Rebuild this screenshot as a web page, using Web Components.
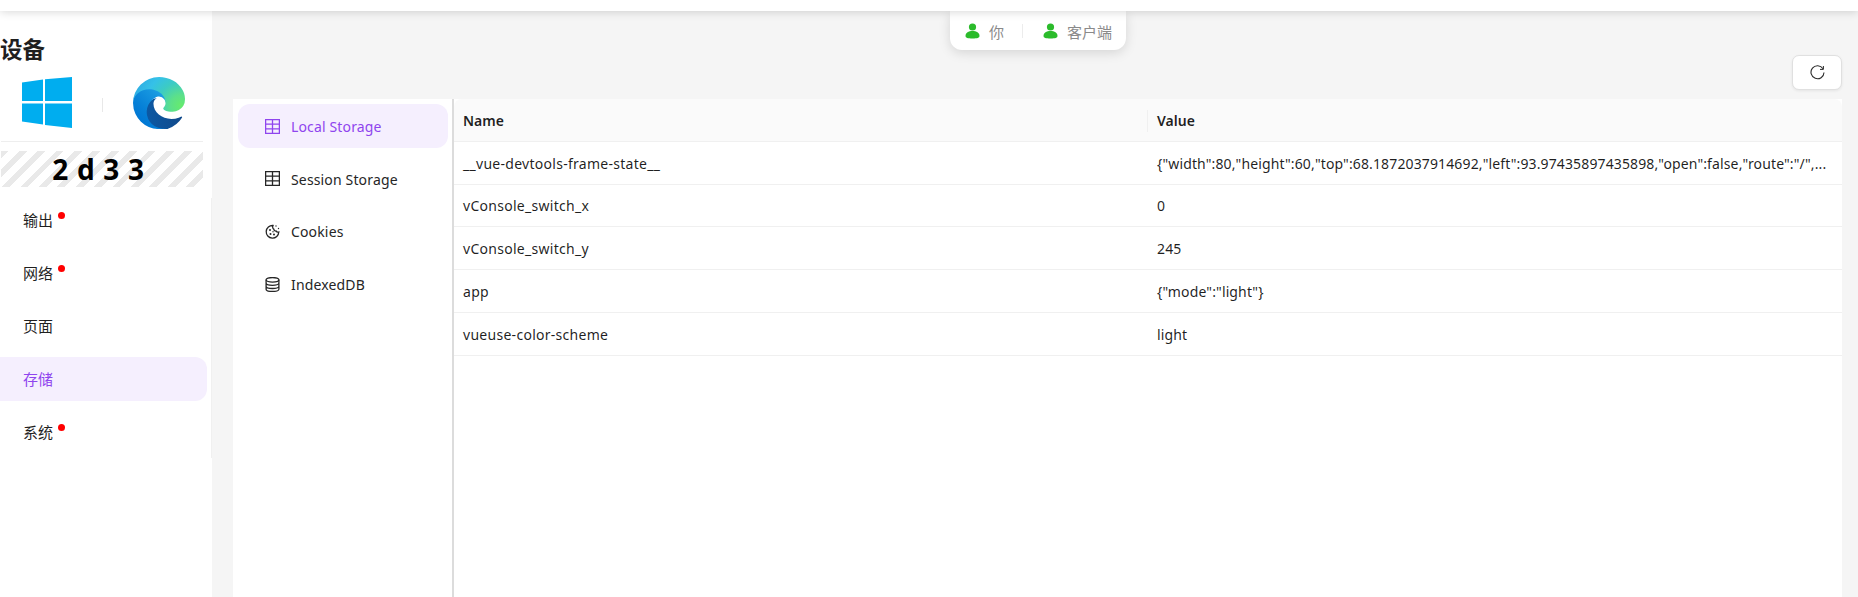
<!DOCTYPE html>
<html lang="zh-CN"><head><meta charset="utf-8"><title>设备</title>
<style>
html,body{margin:0;height:100%;overflow:hidden;background:#f5f5f5}
body{font:14px/22px "Noto Sans","Noto Sans CJK SC",sans-serif;color:rgba(0,0,0,.88)}
</style></head><body>
<app-shell>
  <device-sidebar slot="side">
    <nav-item dot>输出</nav-item>
    <nav-item dot>网络</nav-item>
    <nav-item>页面</nav-item>
    <nav-item active>存储</nav-item>
    <nav-item dot>系统</nav-item>
  </device-sidebar>
  <user-pill slot="pill"></user-pill>
  <refresh-button slot="tools"></refresh-button>
  <storage-panel slot="panel">
    <tab-item slot="tabs" icon="table" active>Local Storage</tab-item>
    <tab-item slot="tabs" icon="table">Session Storage</tab-item>
    <tab-item slot="tabs" icon="cookie">Cookies</tab-item>
    <tab-item slot="tabs" icon="db">IndexedDB</tab-item>
    <kv-table></kv-table>
  </storage-panel>
</app-shell>
<script>
const def=(n,html)=>{customElements.define(n,class extends HTMLElement{
  connectedCallback(){ if(this.shadowRoot) return; const r=this.attachShadow({mode:'open'});
    r.innerHTML=typeof html==='function'?html(this):html;}
});};
def('app-shell',`<style>
:host{display:flex;flex-direction:column;height:597px;overflow:hidden}
.top{height:11px;flex:none;background:#fff;box-shadow:0 1px 10px rgba(0,0,0,.16);position:relative;z-index:2}
.body{flex:1;display:flex;min-height:0;margin-top:-11px}
.main{flex:1;display:flex;flex-direction:column;min-width:0;padding-top:11px}
.bar{height:88px;flex:none;display:flex;align-items:flex-start;padding-left:738px;padding-right:16px}
.panelwrap{flex:1;min-height:0;display:flex;padding:0 16px 0 21px}
::slotted([slot=tools]){margin-left:auto;margin-top:44px}
</style>
<div class="top"></div>
<div class="body"><slot name="side"></slot>
<div class="main"><div class="bar"><slot name="pill"></slot><slot name="tools"></slot></div>
<div class="panelwrap"><slot name="panel"></slot></div></div></div>`);
def('device-sidebar',`<style>
:host{display:flex;flex-direction:column;width:212px;flex:none;background:#fff;padding-top:11px;box-sizing:border-box}
h2{margin:28px 0 0 0;font-size:22.5px;line-height:22px;font-weight:700;color:#1f1f1f}
.logos{display:flex;align-items:center;height:52px;margin-top:16px;padding-left:22px}
.sep{width:1px;height:14px;background:#e8e8e8;margin:4px 30px 0}
.hr{height:1px;background:#eee;margin:12px 9px 0 1px}
.code{height:36px;margin:9px 9px 0 1px;padding-right:7px;box-sizing:border-box;display:flex;align-items:center;justify-content:center;
  font-size:28px;font-weight:700;color:#000;letter-spacing:.7px;line-height:36px;
  background:repeating-linear-gradient(135deg,#e9e9e9 0 5.5px,#fff 5.5px 13px)}
nav{width:212px;box-sizing:border-box;margin-top:11px;height:260px;border-right:1px solid #f0f0f0;display:flex;flex-direction:column;gap:9px}
</style>
<h2>设备</h2>
<div class="logos">
<svg width="50" height="52" viewBox="0 0 50 52"><g fill="#00adef"><polygon points="0,5.500 21,2.500 21,24 0,24"/><polygon points="23,2.300 50,0 50,24 23,24"/><polygon points="0,26.500 21,26.500 21,47.500 0,44.500"/><polygon points="23,26.500 50,26.500 50,51 23,48"/></g></svg>
<div class="sep"></div>
<svg width="52" height="52" viewBox="0 0 256 256"><defs>
<linearGradient id="a" x1="63.300" y1="84" x2="241.700" y2="84" gradientTransform="matrix(1 0 0 -1 0 266)" gradientUnits="userSpaceOnUse"><stop offset="0" stop-color="#0c59a4"/><stop offset="1" stop-color="#114a8b"/></linearGradient>
<linearGradient id="b" x1="152.900" y1="166.300" x2="41.400" y2="44.800" gradientTransform="matrix(1 0 0 -1 0 266)" gradientUnits="userSpaceOnUse"><stop offset="0" stop-color="#1b9de2"/><stop offset=".16" stop-color="#1595df"/><stop offset=".67" stop-color="#0680d7"/><stop offset="1" stop-color="#0078d4"/></linearGradient>
<radialGradient id="c" cx="235" cy="140" r="230" gradientUnits="userSpaceOnUse"><stop offset="0" stop-color="#66eb6e"/><stop offset=".22" stop-color="#5ce08a"/><stop offset=".5" stop-color="#3ccbc4"/><stop offset=".75" stop-color="#35c1e8"/><stop offset="1" stop-color="#2fb0e4"/></radialGradient>
</defs>
<path fill="url(#a)" d="M235.700 195.500a93.700 93.700 0 0 1-10.600 4.700 101.900 101.900 0 0 1-35.900 6.400c-47.300 0-88.500-32.500-88.500-74.300a31.500 31.500 0 0 1 16.400-27.300c-42.800 1.800-53.800 46.400-53.800 72.500 0 73.900 68.100 81.400 82.800 81.400 7.900 0 19.800-2.300 27-4.600l1.300-.4a128.300 128.300 0 0 0 66.600-52.800 4 4 0 0 0-5.300-5.600z"/>
<path fill="url(#b)" d="M105.700 241.400A79.200 79.200 0 0 1 83 220a80.700 80.700 0 0 1 29.500-120c3.200-1.500 8.500-4.100 15.600-4a32.400 32.400 0 0 1 25.700 13 31.900 31.900 0 0 1 6.300 18.700c0-.2 24.500-79.600-80-79.600-43.900 0-80 41.600-80 78.200a130.200 130.200 0 0 0 12.100 56 128 128 0 0 0 156.400 67 75.500 75.500 0 0 1-64-8z"/>
<path fill="url(#c)" d="M152.300 148.900c-.8 1-3.300 2.500-3.300 5.700 0 2.600 1.700 5.200 4.800 7.300 14.300 10 41.400 8.600 41.500 8.600a59.600 59.600 0 0 0 30.300-8.300 61.400 61.400 0 0 0 30.400-52.900c.3-22.400-8-37.300-11.300-43.900C223.500 23.900 177.700 0 128 0A128 128 0 0 0 0 126.200c.5-36.500 36.800-66 80-66 3.500 0 23.500.3 42 10a72.600 72.600 0 0 1 30.900 29.300c6.100 10.600 7.200 24.100 7.200 29.500s-2.700 13.300-7.800 19.900z"/></svg>
</div>
<div class="hr"></div>
<div class="code">2 d 3 3</div>
<nav><slot></slot></nav>`);
def('nav-item',el=>`<style>
:host{display:flex;align-items:center;height:44px;flex:none;margin-right:4px;border-radius:0 12px 12px 0;padding:0 0 0 23px;color:${el.hasAttribute('active')?'#8f45ee':'#1f1f1f'};background:${el.hasAttribute('active')?'#f5effe':'transparent'};box-sizing:border-box}
.wrap{position:relative;font-size:15px;line-height:22px}
.dot{position:absolute;right:-12px;top:3px;width:7px;height:7px;border-radius:50%;background:#f00}
</style><span class="wrap"><slot></slot>${el.hasAttribute('dot')?'<i class="dot"></i>':''}</span>`);
const person=`<svg width="15" height="16" viewBox="0 0 15 16" fill="#2bbb2b"><circle cx="7.500" cy="4" r="3.600"/><path d="M.5 13c0-3.400 3-5 7-5s7 1.600 7 5c0 1.800-2.200 2.500-7 2.500S.5 14.800.5 13z"/></svg>`;
def('user-pill',`<style>
:host{display:flex;align-items:center;width:176px;height:39px;flex:none;box-sizing:border-box;padding-left:15px;background:#fff;border-radius:0 0 12px 12px;box-shadow:0 3px 12px rgba(0,0,0,.13);color:#8a8a8a;position:relative;z-index:1;font-size:15px}
svg{margin-top:1px}
span{margin-left:9px;white-space:nowrap;padding-top:2px}
i{width:1px;height:14px;background:#ececec;margin:0 20px 0 18px}
</style>${person}<span>你</span><i></i>${person}<span>客户端</span>`);
def('refresh-button',`<style>
:host{display:flex;align-items:center;justify-content:center;width:50px;height:35px;box-sizing:border-box;background:#fff;border:1px solid #e0e0e0;border-radius:7px;box-shadow:0 1px 3px rgba(0,0,0,.07)}
</style><svg width="15" height="15" viewBox="0 0 15 15" fill="none" stroke="#2b2b2b" stroke-width="1.100"><path d="M13 3.800A6.500 6.500 0 1 0 14 7.500"/><path d="M13.400 1v3.400H10" stroke-width="1"/></svg>`);
def('storage-panel',`<style>
:host{display:flex;flex:1;min-width:0;background:#fff}
.tabs{width:214px;flex:none;border-right:2px solid #dcdcdc;display:flex;flex-direction:column;gap:8.700px;padding:5px 0 0 5px}
.content{flex:1;min-width:0}
</style><div class="tabs"><slot name="tabs"></slot></div><div class="content"><slot></slot></div>`);
const icons={
 table:`<path d="M.6.6h13.800v13.800H.6zM.6 5.200h13.800M.6 9.800h13.800M7.500.6v13.800"/>`,
 cookie:`<path d="M8 1.500A6.300 6.300 0 1 0 13.800 8c-1 .3-2.200 0-2.700-1-1.200.2-2.300-.6-2.300-1.900C7.700 4.700 7.300 2.800 8 1.500z"/><g fill="currentColor" stroke="none"><circle cx="5" cy="6" r="1"/><circle cx="5.500" cy="10" r="1"/><circle cx="9" cy="10.500" r="1"/><circle cx="8" cy="7.700" r=".7"/><circle cx="11" cy="2" r=".7"/><circle cx="13.500" cy="4.500" r=".7"/></g>`,
 db:`<ellipse cx="7.500" cy="2.800" rx="6.400" ry="2.300"/><path d="M1.100 2.800v9.400c0 1.300 2.900 2.300 6.400 2.300s6.400-1 6.400-2.300V2.800M1.100 6c0 1.300 2.900 2.300 6.400 2.300S13.900 7.300 13.900 6M1.100 9.200c0 1.300 2.900 2.300 6.400 2.300s6.400-1 6.400-2.300"/>`};
def('tab-item',el=>`<style>
:host{display:flex;align-items:center;width:210px;height:44px;flex:none;box-sizing:border-box;padding-left:27px;border-radius:12px;letter-spacing:.15px;background:${el.hasAttribute('active')?'#f5effe':'transparent'};color:${el.hasAttribute('active')?'#8f45ee':'#262626'}}
svg{flex:none;margin-right:11px}
span{padding-top:2px}
</style><svg width="15" height="15" viewBox="0 0 15 15" fill="none" stroke="currentColor" stroke-width="1.300">${icons[el.getAttribute('icon')]}</svg><span><slot></slot></span>`);
def('kv-table',()=>{
 const rows=[['__vue-devtools-frame-state__','{"width":80,"height":60,"top":68.1872037914692,"left":93.97435897435898,"open":false,"route":"/",...'],['vConsole_switch_x','0'],['vConsole_switch_y','245'],['app','{"mode":"light"}'],['vueuse-color-scheme','light']];
 return `<style>
:host{display:block}
.r{display:grid;grid-template-columns:50% 50%;height:42.800px;box-sizing:border-box;border-bottom:1px solid #f0f0f0;align-items:center;padding-top:2px}
.c{padding:0 0 0 9px;white-space:nowrap;min-width:0;height:22px;letter-spacing:.13px}
.c:first-child{letter-spacing:.28px}
.h{background:#fafafa;font-weight:600;border-top-left-radius:8px;border-top-right-radius:8px}
.h .c,.h .c:first-child{letter-spacing:0}
.h .c+.c{position:relative}
.h .c+.c::before{content:"";position:absolute;left:-1px;top:0;bottom:0;width:1px;background:#f0f0f0}
</style><div class="r h"><div class="c">Name</div><div class="c">Value</div></div>`+rows.map(r=>`<div class="r"><div class="c">${r[0]}</div><div class="c">${r[1]}</div></div>`).join('');
});
</script></body></html>
